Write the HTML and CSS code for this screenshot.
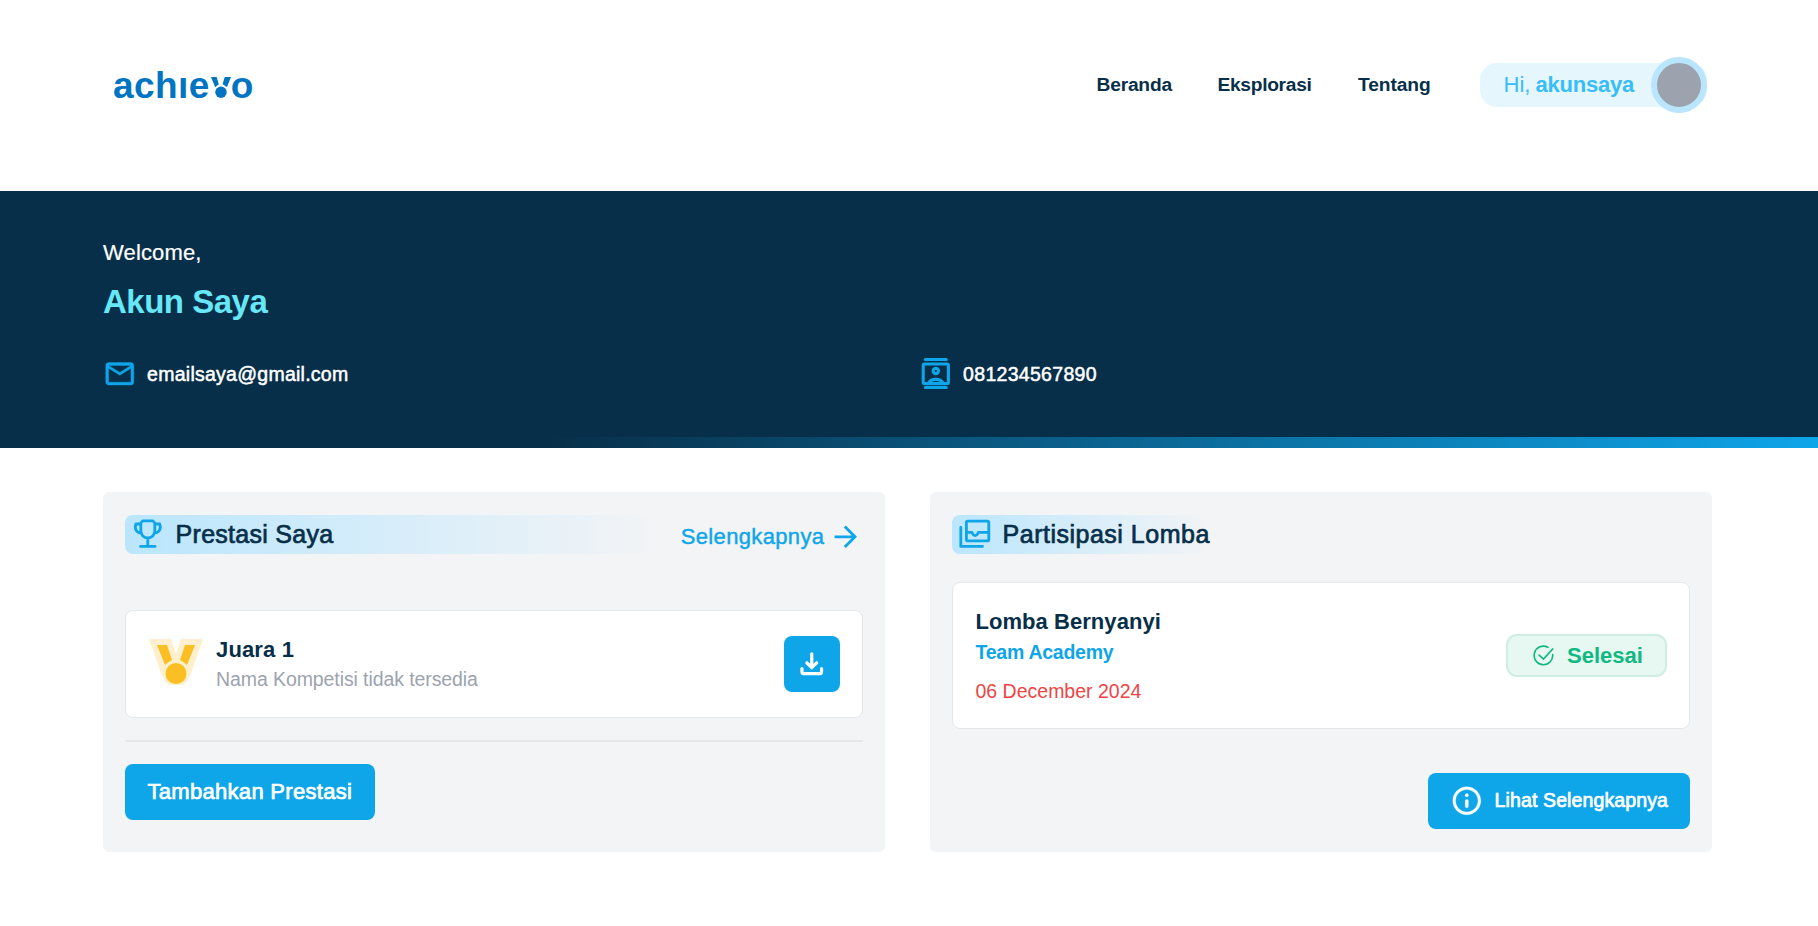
FILE: index.html
```html
<!DOCTYPE html>
<html lang="id">
<head>
<meta charset="utf-8">
<title>Achievo</title>
<link rel="stylesheet" href="styles.css">
</head>
<body>
<header class="header">
  <a class="logo" aria-label="achievo"><span class="logo-text">achıe</span><svg class="logo-v" viewBox="0 0 20 21"><path d="M0 0h5.600L7.800 7.200 4.200 10.200zM13.700 0H20l-4 10-4.400-2.800z"/><circle cx="10" cy="15.300" r="5.700"/></svg><span class="logo-text">o</span></a>
  <nav class="nav">
    <a class="t nav-1">Beranda</a><a class="t nav-2">Eksplorasi</a><a class="t nav-3">Tentang</a>
  </nav>
  <div class="user"><span class="t hi">Hi,</span><span class="t name">akunsaya</span><span class="avatar"></span></div>
</header>
<section class="hero">
  <p><span class="t welcome">Welcome,</span></p>
  <h1><span class="t fullname">Akun Saya</span></h1>
  <div class="contacts">
    <div class="contact"><svg class="icon" viewBox="0 0 24 24" fill="currentColor" stroke="currentColor" stroke-width=".3"><path d="M22 6c0-1.100-.9-2-2-2H4c-1.100 0-2 .9-2 2v12c0 1.100.9 2 2 2h16c1.100 0 2-.9 2-2zm-2 0-8 5-8-5zm0 12H4V8l8 5 8-5z"/></svg><span class="t email">emailsaya@gmail.com</span></div>
    <div class="contact"><svg class="icon" viewBox="0 0 24 24" fill="none" stroke="currentColor" stroke-width="2.200"><path d="M4.500 1.800h15M4.500 21.800h15" stroke-linecap="round"/><rect x="3" y="5" width="18" height="14" rx="1"/><circle cx="12" cy="10" r="1.900"/><path d="M6.500 19c1.200-2 3.200-3 5.500-3s4.300 1 5.500 3"/></svg><span class="t phone">081234567890</span></div>
  </div>
</section>
<main class="panels">
  <section class="panel">
    <div class="panel-head">
      <h2 class="title wide"><svg class="icon" viewBox="0 0 24 24" fill="none" stroke="currentColor" stroke-width="2"><path d="M8.500 2.700h7L17 4.200V10a5 5 0 0 1-10 0V4.200zM7 5H3.500C2.200 8.500 4 11.500 7.500 11.500M17 5h3.500c1.300 3.500-.5 6.500-4 6.500M12 15v6M6.800 21h10.400" stroke-linejoin="round" stroke-linecap="round"/></svg><span class="t t-prestasi">Prestasi Saya</span></h2>
      <a class="more"><span class="t t-more">Selengkapnya</span><svg class="icon" viewBox="0 0 24 24" fill="currentColor"><path d="m12 4-1.410 1.410L16.170 11H4v2h12.170l-5.580 5.590L12 20l8-8z"/></svg></a>
    </div>
    <article class="card award">
      <svg class="medal" viewBox="0 0 54 46"><path d="M0 0h22l5 15 5-15h22L41 37H13z" fill="#fef0cd"/><path d="M8 6h10l5 15-7 5zM36 6h10l-8 20-7-5z" fill="#fbbf24"/><circle cx="27" cy="34.500" r="13.500" fill="#fef0cd"/><circle cx="27" cy="34.500" r="10.500" fill="#fbbf24"/></svg>
      <div class="award-text"><span class="t juara">Juara 1</span><span class="t comp">Nama Kompetisi tidak tersedia</span></div>
      <button class="download" aria-label="Unduh"><svg viewBox="0 0 24 24" fill="none" stroke="currentColor" stroke-width="3.300" stroke-linecap="round" stroke-linejoin="round"><path d="M12 1.800v14M7 11l5 5 5-5M2 17v3.500a1.500 1.500 0 0 0 1.500 1.500h17a1.500 1.500 0 0 0 1.500-1.500V17"/></svg></button>
    </article>
    <hr>
    <button class="btn add"><span class="t t-add">Tambahkan Prestasi</span></button>
  </section>
  <section class="panel">
    <div class="panel-head">
      <h2 class="title narrow"><svg class="icon" viewBox="0 0 24 24" fill="none" stroke="currentColor" stroke-width="2" stroke-linecap="round" stroke-linejoin="round"><rect x="6" y="3" width="16" height="14" rx="1"/><path d="M6 11h4c1 3 3.500 3 4.500 0H22M2 7.500v13.500h15.500"/></svg><span class="t t-part">Partisipasi Lomba</span></h2>
    </div>
    <article class="card event">
      <div class="event-text"><span class="t lomba">Lomba Bernyanyi</span><span class="t team">Team Academy</span><span class="t date">06 December 2024</span></div>
      <span class="badge"><svg viewBox="0 0 24 24" fill="none" stroke="currentColor" stroke-width="1.900" stroke-linecap="round"><path d="M17 2.600A10.600 10.600 0 1 0 22.500 11M7 11.500l5 4.500L22.500 4.500"/></svg><span class="t t-done">Selesai</span></span>
    </article>
    <button class="btn see"><svg class="icon" viewBox="0 0 24 24" fill="currentColor" stroke="currentColor" stroke-width=".2"><path d="M12 2C6.480 2 2 6.480 2 12s4.480 10 10 10 10-4.480 10-10S17.520 2 12 2m0 18c-4.410 0-8-3.590-8-8s3.590-8 8-8 8 3.590 8 8-3.590 8-8 8"/><circle cx="12" cy="8" r="1.200"/><rect x="10.900" y="11" width="2.200" height="6" rx="1"/></svg><span class="t t-see">Lihat Selengkapnya</span></button>
  </section>
</main>
</body>
</html>
```
FILE: styles.css
```css
* { box-sizing: border-box; margin: 0; padding: 0; }
body { width: 1818px; height: 926px; overflow: hidden; background: #fff; color: #082f49; font-family: "Liberation Sans", Arial, sans-serif; }
h1, h2 { font-weight: 400; font-size: inherit; }
button { border: 0; font: inherit; color: #fff; background: #0ea5e9; }
.t { white-space: nowrap; display: block; -webkit-text-stroke: 0.7px currentColor; }
.icon { width: 33.6px; height: 33.6px; flex: none; display: block; }

.header { height: 191px; padding: 0 106px 21px 113px; display: flex; align-items: center; }
.logo { display: flex; align-items: baseline; color: #0275c2; width: 142px; padding-top: 1px; }
.logo-text { font: 700 37px/40px "Liberation Sans", sans-serif; letter-spacing: 0.4px; }
.logo-v { width: 20px; height: 21px; margin: 0 0 -1px 1px; fill: currentColor; }
.nav { display: flex; margin-left: auto; font-size: 19.200px; font-weight: 700; margin-right: -1px; }
.nav .t { -webkit-text-stroke: 0; }
.nav-1 { width: 121px; letter-spacing: -0.200px; }
.nav-2 { width: 140.500px; letter-spacing: -0.300px; }
.nav-3 { width: 123px; letter-spacing: -0.080px; }
.user { height: 44px; width: 227px; border-radius: 17px; padding-left: 23.500px; display: flex; align-items: center; background: #e5f6fd; color: #38bdf8; font-size: 22px; gap: 5px; position: relative; margin-right: 5px; }
.hi { -webkit-text-stroke: 0; }
.name { font-weight: 700; -webkit-text-stroke: 0; letter-spacing: -0.200px; }
.avatar { position: absolute; left: 171px; top: -6px; width: 56px; height: 56px; border-radius: 50%; background: #9ca3af; border: 6px solid #bae6fd; }

.hero { height: 257px; background: linear-gradient(90deg, #082f49 30%, #0ea5e9) bottom / 100% 11px no-repeat #082f49; color: #fff; padding: 46px 103px 0; }
.welcome { font-size: 22px; line-height: 32px; -webkit-text-stroke: 0.2px; letter-spacing: 0.150px; }
.fullname { font-size: 33px; line-height: 44px; color: #67e8f9; margin-top: 11px; font-weight: 700; -webkit-text-stroke: 0; letter-spacing: -0.500px; }
.contacts { display: grid; grid-template-columns: 816px 1fr; margin-top: 34px; }
.contact { display: flex; align-items: center; gap: 11px; font-size: 19.500px; }
.contact .t { -webkit-text-stroke: 0.5px; }
.contact .icon, .title .icon { color: #0ea5e9; }
.contact .icon { margin: -1px 0 0 -0.500px; }
.email { letter-spacing: 0.260px; }
.phone { letter-spacing: 0.300px; }

.panels { display: grid; grid-template-columns: 782px 782px; gap: 45px; padding: 44px 103px 0; }
.panel { height: 360px; background: #f3f4f6; border-radius: 6px; padding: 23px 22px; display: flex; flex-direction: column; }
.panel-head { display: flex; justify-content: space-between; height: 39px; }
.title { height: 39px; border-radius: 8px; display: flex; align-items: center; gap: 11.500px; padding-left: 5.500px; font-size: 25px; }
.title .icon { margin-top: -2px; }
.wide { width: 535px; background: linear-gradient(90deg, #bae6fd, #f3f4f6); }
.narrow { width: 258px; background: linear-gradient(90deg, #bae6fd, #f3f4f6); }
.t-prestasi { letter-spacing: 0.270px; }
.t-part { letter-spacing: 0.500px; }
.more { color: #0ea5e9; display: flex; align-items: center; gap: 5px; font-size: 22px; padding-top: 4px; }
.t-more { letter-spacing: 0.350px; -webkit-text-stroke: 0.4px; }
.card { background: #fff; border: 1px solid #e5e7eb; border-radius: 8px; display: flex; align-items: center; padding: 0 22px; }
.award { height: 108px; margin-top: 56px; }
.medal { width: 54px; height: 46px; margin: -5px 0 0 1px; }
.award-text { margin: -1px 0 0 13px; }
.juara { font-size: 22px; font-weight: 700; -webkit-text-stroke: 0; line-height: 30px; letter-spacing: 0.150px; }
.comp { font-size: 19.500px; color: #9ca3af; -webkit-text-stroke: 0; line-height: 28px; letter-spacing: -0.090px; }
.download { width: 56px; height: 56px; border-radius: 8px; margin-left: auto; display: grid; place-items: center; }
.download svg { width: 23.500px; height: 23.500px; }
hr { border: 0; height: 2px; background: #e5e7eb; margin-top: 22px; }
.btn { height: 56px; border-radius: 8px; display: flex; align-items: center; }
.add { width: 250px; padding-left: 22.500px; margin-top: 22px; font-size: 22px; }
.t-add { letter-spacing: 0.300px; }
.event { height: 147px; margin-top: 28px; padding-left: 22.500px; }
.event-text { padding-top: 1px; }
.lomba { font-size: 22px; font-weight: 700; -webkit-text-stroke: 0; line-height: 30px; letter-spacing: 0.050px; }
.team { font-size: 19.500px; font-weight: 700; -webkit-text-stroke: 0; color: #0ea5e9; line-height: 31px; letter-spacing: -0.250px; }
.date { font-size: 19.500px; color: #ef4444; -webkit-text-stroke: 0; line-height: 28px; margin-top: 9px; }
.badge { margin-left: auto; width: 161px; height: 43px; border: 2px solid #ceeee2; border-radius: 11px; background: #e7f7f1; color: #10b981; display: flex; align-items: center; padding-left: 25px; gap: 13px; font-size: 22px; font-weight: 700; }
.badge .t { -webkit-text-stroke: 0; }
.badge svg { width: 21px; height: 21px; }
.see { width: 262px; margin: 44px 0 0 auto; padding-left: 22px; gap: 11px; font-size: 19.500px; }
.t-see { letter-spacing: 0.120px; position: relative; top: -1px; }
```
